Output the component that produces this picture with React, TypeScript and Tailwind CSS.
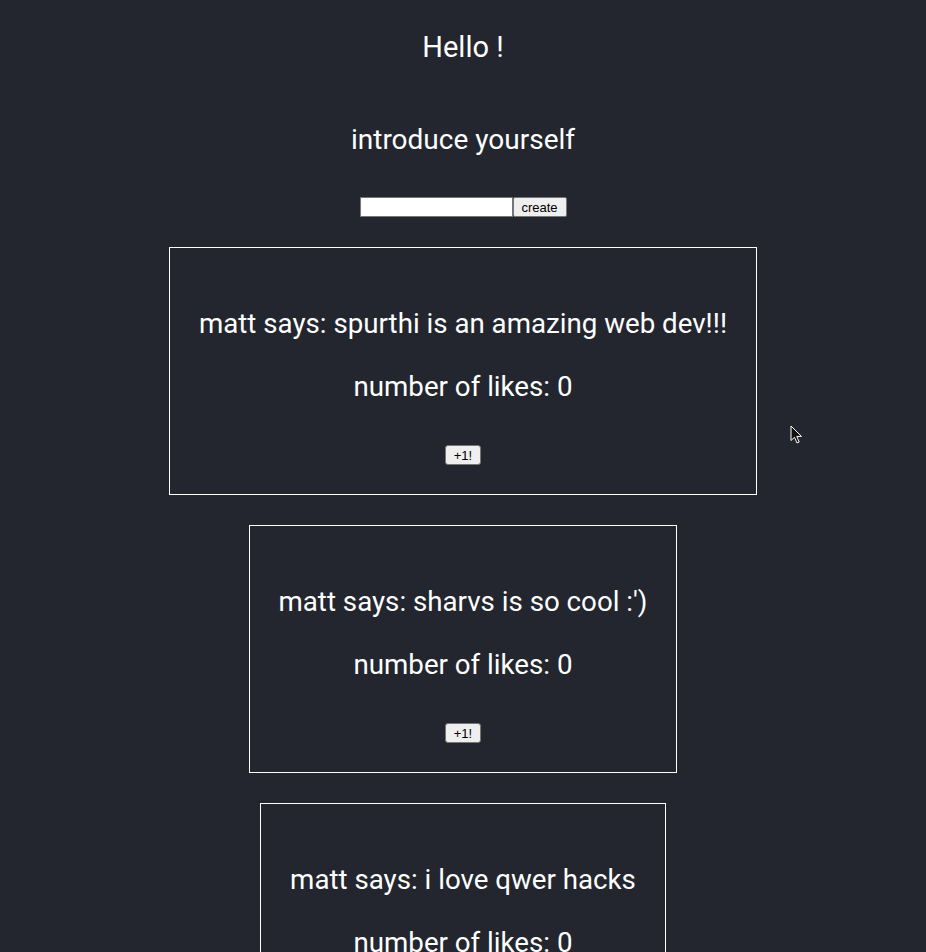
import React, { useState } from 'react';

interface Post {
  author: string;
  text: string;
  likes: number;
}

const initialPosts: Post[] = [
  { author: 'matt', text: 'spurthi is an amazing web dev!!!', likes: 0 },
  { author: 'matt', text: "sharvs is so cool :')", likes: 0 },
  { author: 'matt', text: 'i love qwer hacks', likes: 0 },
];

function PostCard({ post, onLike }: { post: Post; onLike: () => void }) {
  return <div className="border border-white px-[29px] pt-[60px] pb-[29px] flex flex-col items-center">
      <p className="text-[27.7px] leading-[32px] whitespace-nowrap">
        {post.author} says: {post.text}
      </p>
      <p className="mt-[31px] text-[27.7px] leading-[32px] whitespace-nowrap">
        number of likes: {post.likes}
      </p>
      <button onClick={onLike} className="mt-[42px] h-5 px-[8px] bg-[#efefef] text-black text-[13px] leading-none border border-[#767676] rounded-[3px] font-['Liberation_Sans',sans-serif]">
        +1!
      </button>
    </div>;
}

export default function App() {
  const [posts, setPosts] = useState<Post[]>(initialPosts);
  const [draft, setDraft] = useState('');
  const like = (index: number) => {
    setPosts(prev => prev.map((p, i) => i === index ? { ...p, likes: p.likes + 1 } : p));
  };
  return <div className="relative min-h-screen bg-[#23262e] text-white font-['Roboto',sans-serif] flex flex-col items-center pt-[29px] pb-10 overflow-hidden">
      <h1 className="text-[29px] leading-[36px] font-normal">Hello !</h1>
      <h2 className="mt-[59px] text-[28px] leading-[32px] font-normal">introduce yourself</h2>
      <div className="mt-[41px] flex">
        <input value={draft} onChange={e => setDraft(e.target.value)} className="w-[153px] h-5 bg-white border border-[#767676] text-black text-[13px] px-1 outline-none" />
        <button className="h-5 w-[54px] bg-[#efefef] text-black text-[13px] leading-none border border-[#767676] rounded-[2px] font-['Liberation_Sans',sans-serif]">
          create
        </button>
      </div>
      <div className="mt-[30px] flex flex-col items-center gap-[30px]">
        {posts.map((post, i) => <PostCard key={i} post={post} onLike={() => like(i)} />)}
      </div>
      {/* mouse pointer captured in the screenshot */}
      <svg className="absolute left-[790px] top-[425px]" width="14" height="20" viewBox="0 0 14 20">
        <path d="M1 1 L1 15.5 L4.5 12.3 L7 18 L9.2 17 L6.8 11.4 L11.5 11.4 Z" fill="#111" stroke="#fff" strokeWidth="1" strokeLinejoin="round" />
      </svg>
    </div>;
}
